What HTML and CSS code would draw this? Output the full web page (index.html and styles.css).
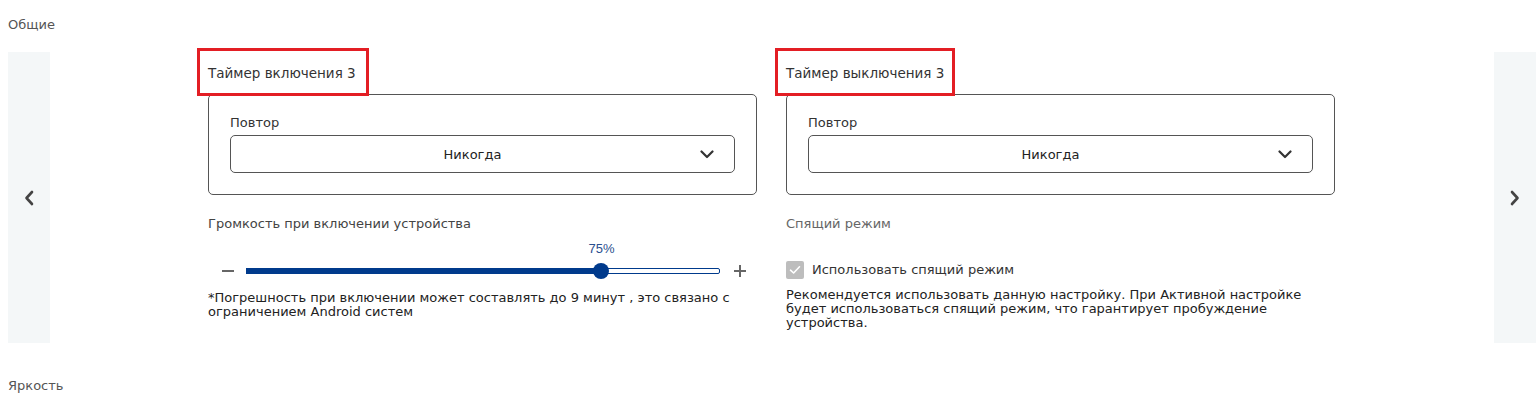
FILE: index.html
```html
<!DOCTYPE html>
<html lang="ru">
<head>
  <meta charset="UTF-8">
  <title>Настройки</title>
  <link rel="stylesheet" href="styles.css">
</head>
<body>
  <div class="group-title">Общие</div>

  <div class="carousel">
    <div class="nav">
      <svg width="10" height="16" viewBox="0 0 10 16"><path d="M8 2 L2.5 8 L8 14" fill="none" stroke="#444" stroke-width="2.6" stroke-linecap="round" stroke-linejoin="round"/></svg>
    </div>

    <div class="slide">
      <div class="column">
        <div class="timer-title">Таймер включения 3</div>
        <div class="card">
          <div class="field-label">Повтор</div>
          <div class="select">
            <span class="select-value">Никогда</span>
            <svg width="14" height="9" viewBox="0 0 14 9"><path d="M1.5 1.5 L7 7 L12.5 1.5" fill="none" stroke="#333" stroke-width="2.2" stroke-linecap="round" stroke-linejoin="round"/></svg>
          </div>
        </div>

        <div class="option-title">Громкость при включении устройства</div>
        <div class="volume">
          <div class="volume-value"><span style="left: 75%">75%</span></div>
          <div class="slider-row">
            <span class="step minus"></span>
            <div class="track">
              <div class="track-fill" style="width: 75%"></div>
              <div class="thumb" style="left: 75%"></div>
            </div>
            <span class="step plus"></span>
          </div>
        </div>
        <p class="note">*Погрешность при включении может составлять до 9 минут , это связано с ограничением Android систем</p>
      </div>

      <div class="column">
        <div class="timer-title wide">Таймер выключения 3</div>
        <div class="card">
          <div class="field-label">Повтор</div>
          <div class="select">
            <span class="select-value">Никогда</span>
            <svg width="14" height="9" viewBox="0 0 14 9"><path d="M1.5 1.5 L7 7 L12.5 1.5" fill="none" stroke="#333" stroke-width="2.2" stroke-linecap="round" stroke-linejoin="round"/></svg>
          </div>
        </div>

        <div class="option-title muted">Спящий режим</div>
        <label class="check">
          <span class="check-box">
            <svg width="12" height="10" viewBox="0 0 12 10"><path d="M1.5 5.2 L4.6 8 L10.5 1.8" fill="none" stroke="#fff" stroke-width="1.6" stroke-linecap="round" stroke-linejoin="round"/></svg>
          </span>
          Использовать спящий режим
        </label>
        <p class="note hint">Рекомендуется использовать данную настройку. При Активной настройке будет использоваться спящий режим, что гарантирует пробуждение устройства.</p>
      </div>
    </div>

    <div class="nav">
      <svg width="10" height="16" viewBox="0 0 10 16"><path d="M2 2 L7.5 8 L2 14" fill="none" stroke="#444" stroke-width="2.6" stroke-linecap="round" stroke-linejoin="round"/></svg>
    </div>
  </div>

  <div class="group-title next">Яркость</div>
</body>
</html>
```

FILE: styles.css
```css
* { box-sizing: border-box; margin: 0; padding: 0; }
body {
  font-family: 'DejaVu Sans', sans-serif;
  font-size: 13px;
  color: #333;
  background: #fff;
  padding-top: 16px;
  padding-left: 8px;
}
.group-title {
  line-height: 18px;
  color: #555;
  margin-bottom: 18px;
}
.group-title.next {
  margin-top: 34px;
}
.carousel {
  display: flex;
  height: 291px;
}
.nav {
  width: 42px;
  background-color: #f4f7f8;
  display: flex;
  align-items: center;
  justify-content: center;
}
.slide {
  flex: 1;
  display: grid;
  grid-template-columns: 549px 549px;
  column-gap: 29px;
  padding: 12px 0 0 158px;
}
.timer-title {
  position: relative;
  font-size: 13.5px;
  line-height: 18px;
  color: #333;
  margin-bottom: 12px;
}
.timer-title::after {
  content: "";
  position: absolute;
  left: -11px;
  top: -16px;
  width: 166px;
  height: 42px;
  border: 3px solid #e31e24;
}
.timer-title.wide::after {
  width: 174px;
}
.card {
  border: 1px solid #555;
  border-radius: 5px;
  padding: 20px 21px 21px;
}
.field-label {
  line-height: 16px;
  color: #333;
  margin-bottom: 4px;
}
.select {
  height: 38px;
  border: 1px solid #555;
  border-radius: 5px;
  display: flex;
  align-items: center;
  padding: 0 20px 0 14px;
}
.select-value {
  flex: 1;
  text-align: center;
  color: #222;
}
.option-title {
  margin-top: 20px;
  line-height: 18px;
  color: #444;
}
.option-title.muted {
  color: #666;
}
.volume {
  margin-top: 8px;
}
.volume-value {
  position: relative;
  width: 474px;
  height: 16px;
  margin-left: 38px;
  line-height: 16px;
  font-family: 'Liberation Sans', sans-serif;
  font-size: 13px;
  color: #2a4f8f;
}
.volume-value span {
  position: absolute;
  top: 0;
  transform: translateX(-50%);
}
.slider-row {
  display: flex;
  align-items: center;
  height: 26px;
  margin-top: 1px;
}
.step {
  position: relative;
  width: 12px;
  height: 12px;
  margin: 0 12px 0 14px;
}
.step::before, .plus::after {
  content: "";
  position: absolute;
  left: 0;
  top: 5px;
  width: 12px;
  height: 2px;
  background: #666;
}
.plus {
  margin: 0 0 0 14px;
}
.plus::after {
  left: 5px;
  top: 0;
  width: 2px;
  height: 12px;
}
.track {
  position: relative;
  width: 474px;
  height: 6px;
  border: 1.5px solid #003a8c;
  border-radius: 2px;
  background: #fff;
}
.track-fill {
  position: absolute;
  left: -1.5px;
  top: -1.5px;
  height: 6px;
  background: #003a8c;
}
.thumb {
  position: absolute;
  top: 50%;
  width: 16px;
  height: 16px;
  margin: -8px 0 0 -8px;
  border-radius: 50%;
  background: #003a8c;
}
.note {
  margin-top: 7px;
  line-height: 13.5px;
  color: #222;
}
.check {
  display: flex;
  align-items: center;
  gap: 8px;
  margin-top: 28px;
  line-height: 18px;
  color: #333;
}
.check-box {
  width: 18px;
  height: 18px;
  border-radius: 2px;
  background: #bdbdbd;
  display: flex;
  align-items: center;
  justify-content: center;
}
.note.hint {
  margin-top: 9px;
  line-height: 14px;
}
```
